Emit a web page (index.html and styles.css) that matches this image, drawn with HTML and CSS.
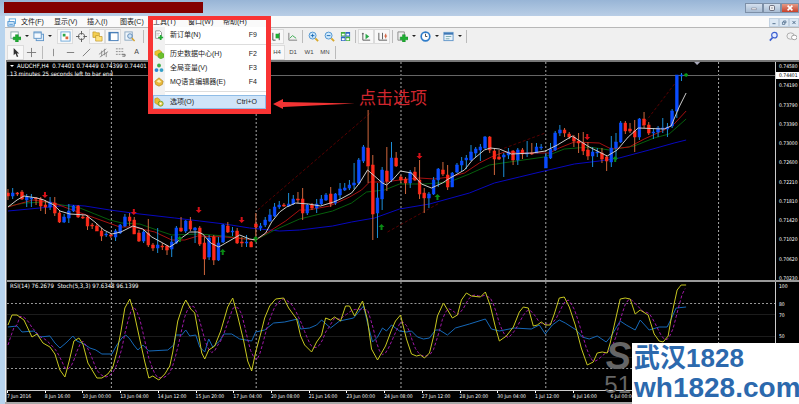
FILE: index.html
```html
<!DOCTYPE html>
<html lang="zh-CN">
<head>
<meta charset="utf-8">
<title>AUDCHF,H4</title>
<link rel="stylesheet" href="styles.css">
</head>
<body>
<header class="titlebar">
  <div class="title-block"></div>
  <div class="win-controls">
    <button class="win-btn" aria-label="最小化"><svg viewBox="0 0 18 10"><path d="M6 5h6v2H6z" fill="#fff" stroke="#667" stroke-width=".6"/></svg></button>
    <button class="win-btn" aria-label="还原"><svg viewBox="0 0 18 10"><rect x="6" y="2" width="6" height="6" rx="1" fill="#fff" stroke="#445"/><path d="M8 5h2" stroke="#445"/></svg></button>
    <button class="win-btn close" aria-label="关闭"><svg viewBox="0 0 18 10"><path d="M6 2l6 6M12 2l-6 6" stroke="#fff" stroke-width="2"/></svg></button>
  </div>
</header>
<div class="frame">
<nav class="menubar">
  <svg class="app-icon" viewBox="0 0 10 10"><rect x="2.500" y="1" width="7" height="5" fill="#fff" stroke="#58a6dc"/><rect x="1" y="4" width="7" height="5" fill="#d5eafb" stroke="#4a90cf"/><path d="M2.500 7h4" stroke="#4a90cf"/></svg>
  <button>文件(F)</button><button>显示(V)</button><button>插入(I)</button><button>图表(C)</button><button>工具(T)</button><button>窗口(W)</button><button>帮助(H)</button>
  <div class="mdi">
    <button aria-label="最小化"><svg viewBox="0 0 10 9"><path d="M3 6h4" stroke="#357"/></svg></button>
    <button aria-label="还原"><svg viewBox="0 0 10 9"><path d="M3 4h3v3H3zM4.500 4V2.500h3V5H6" fill="none" stroke="#357" stroke-width=".8"/></svg></button>
    <button aria-label="关闭"><svg viewBox="0 0 10 9"><path d="M3 2.500l4 4M7 2.500l-4 4" stroke="#357"/></svg></button>
  </div>
</nav>
<div class="toolbar main-tools">
  <div class="tools first">
    <button class="drop" aria-label="新图表"><svg viewBox="0 0 12 12"><rect x="1" y="1" width="8" height="7" fill="#fff" stroke="#8aa"/><path d="M6 4h3v2.500h3v3H9V12H6V9.500H3.500v-3H6z" fill="#1fae32" stroke="#0d8420" stroke-width=".5"/></svg></button>
    <button class="drop" aria-label="配置"><svg viewBox="0 0 12 12"><rect x="3.500" y="3.500" width="8" height="7" fill="#dcebf8" stroke="#5f95c8"/><rect x="1" y="1" width="8" height="7" fill="#f4f9fe" stroke="#5f95c8"/><path d="M1 2h8" stroke="#5f95c8"/></svg></button>
    <button class="on" aria-label="市场报价"><svg viewBox="0 0 12 12"><rect x="1" y="1" width="10" height="10" fill="#fff" stroke="#6aa6d8"/><path d="M3 3h3v3H3z" fill="#2aa84a"/><path d="M6 6h3v3H6z" fill="#e0663c"/></svg></button>
    <button aria-label="数据窗口"><svg viewBox="0 0 12 12"><circle cx="6" cy="6" r="3.500" fill="none" stroke="#666"/><path d="M6 0v4M6 8v4M0 6h4M8 6h4" stroke="#555"/></svg></button>
    <button class="on" aria-label="导航"><svg viewBox="0 0 12 12"><path d="M1 1h3l1 1h3v5H1z" fill="#f4cf52" stroke="#b98e20" stroke-width=".7"/><path d="M4 5h3l1 1h3v5H4z" fill="#ffe27a" stroke="#b98e20" stroke-width=".7"/></svg></button>
    <button class="on" aria-label="终端"><svg viewBox="0 0 12 12"><rect x="1" y="1.500" width="10" height="9" fill="#fff" stroke="#3f78b5"/><path d="M2 2v8" stroke="#3f78b5" stroke-width="2"/><path d="M1 2h10" stroke="#3f78b5"/></svg></button>
    <button aria-label="策略测试"><svg viewBox="0 0 12 12"><rect x="1" y="1" width="8" height="9" fill="#eef5fb" stroke="#8aa6c0"/><circle cx="6.500" cy="5.500" r="2.500" fill="#cfe4f6" stroke="#5a86b5"/><path d="M8.500 7.500l3 3.500" stroke="#d5a128" stroke-width="1.600"/></svg></button>
  </div>
  <i class="sep"></i>
  <div class="tools second">
    <button class="on" aria-label="蜡烛图"><svg viewBox="0 0 12 12"><path d="M2 2v8h3M9 2v8" stroke="#444" fill="none"/><path d="M5 3h4v5H5z" fill="#1fae32"/></svg></button>
    <button aria-label="折线图"><svg viewBox="0 0 12 12"><path d="M2 2v8h9" stroke="#777" fill="none"/><path d="M3 8l3-3 4 3" stroke="#35a84a" fill="none"/></svg></button>
    <i class="sep"></i>
    <button aria-label="放大"><svg viewBox="0 0 12 12"><circle cx="5" cy="5" r="3.800" fill="#cfe9fb" stroke="#4a90cf"/><path d="M3 5h4M5 3v4" stroke="#1e6ab3"/><path d="M8 8l3 3" stroke="#d8a82a" stroke-width="2"/></svg></button>
    <button aria-label="缩小"><svg viewBox="0 0 12 12"><circle cx="5" cy="5" r="3.800" fill="#cfe9fb" stroke="#4a90cf"/><path d="M3 5h4" stroke="#1e6ab3"/><path d="M8 8l3 3" stroke="#d8a82a" stroke-width="2"/></svg></button>
    <button aria-label="平铺"><svg viewBox="0 0 12 12"><path d="M1 1h5v5H1zM6 6h5v5H6z" fill="#44b03c"/><path d="M6 1h5v5H6zM1 6h5v5H1z" fill="#2f66c4"/><path d="M2 3h3v2H2zM7 3h3v2H7zM2 8h3v2H2zM7 8h3v2H7z" fill="#fff"/></svg></button>
    <i class="sep"></i>
    <button class="on" aria-label="自动滚动"><svg viewBox="0 0 12 12"><path d="M2 2v8h8M1 3h2" stroke="#555" fill="none"/><path d="M5 3l4 3-4 3z" fill="#2aa84a"/></svg></button>
    <button class="on" aria-label="图表平移"><svg viewBox="0 0 12 12"><path d="M2 2v8h9M6 2v7" stroke="#555" fill="none"/><path d="M11 5.500H8M9.500 3v5" stroke="#d0522c"/></svg></button>
    <i class="sep"></i>
    <button class="drop" aria-label="指标"><svg viewBox="0 0 12 12"><path d="M1 1h7v9H1z" fill="#eee" stroke="#888"/><path d="M6 4h3v2.500h3v3H9V12H6V9.500H3.500v-3H6z" fill="#1fae32" stroke="#0d8420" stroke-width=".5"/></svg></button>
    <button class="drop" aria-label="时段"><svg viewBox="0 0 12 12"><circle cx="6" cy="6" r="4.700" fill="#fff" stroke="#2f7cc9" stroke-width="1.800"/><path d="M6 3v3h2" stroke="#444" fill="none"/></svg></button>
    <button class="drop" aria-label="模板"><svg viewBox="0 0 12 12"><rect x="1" y="1.500" width="10" height="9" fill="#eaf3fb" stroke="#5f95c8"/><path d="M1 3h10" stroke="#3f78b5" stroke-width="2"/><path d="M3 6h6M3 8.500h4" stroke="#7aa" /></svg></button>
    <i class="sep"></i>
  </div>
  <div class="tools right">
    <button aria-label="搜索"><svg viewBox="0 0 12 12"><circle cx="7" cy="4.500" r="3" fill="#e4ecff" stroke="#3c5fd0" stroke-width="1.300"/><path d="M5 7l-3 3.500" stroke="#3c5fd0" stroke-width="1.800"/></svg></button>
    <button aria-label="聊天"><svg viewBox="0 0 12 12"><ellipse cx="5" cy="5.500" rx="4" ry="3.500" fill="#f2f2f2" stroke="#aaa"/><ellipse cx="9" cy="7" rx="3" ry="2.500" fill="#fff" stroke="#999"/></svg></button>
  </div>
</div>
<div class="toolbar line-tools">
  <div class="tools draw">
    <button class="on" aria-label="光标"><svg viewBox="0 0 12 12"><path d="M4 1v8l2-2 1.500 4 1.500-.6L7.500 7H10z" fill="#333"/></svg></button>
    <button aria-label="十字线"><svg viewBox="0 0 12 12"><path d="M6 1v10M1 6h10" stroke="#777"/></svg></button>
    <i class="sep"></i>
    <button aria-label="垂直线"><svg viewBox="0 0 12 12"><path d="M6 2v8" stroke="#888"/></svg></button>
    <button aria-label="水平线"><svg viewBox="0 0 12 12"><path d="M2 6h8" stroke="#777"/></svg></button>
    <button aria-label="趋势线"><svg viewBox="0 0 12 12"><path d="M2 10l8-8" stroke="#777"/></svg></button>
    <button aria-label="通道"><svg viewBox="0 0 12 12"><path d="M1 8l8-6M2 11l9-6M4 4v6M7 2v7M9 6v5" stroke="#777" stroke-width=".8"/></svg></button>
    <button aria-label="斐波纳契"><svg viewBox="0 0 12 12"><path d="M1 2h9M1 5h9M1 8h9" stroke="#888" stroke-dasharray="2 1"/><path d="M8 8h3v2H8" stroke="#666" fill="none"/></svg></button>
    <button>A</button>
  </div>
  <div class="tools periods">
    <button class="on">H4</button><button>D1</button><button>W1</button><button>MN</button><i class="sep"></i>
  </div>
</div>
<main class="chart">
  <section class="pane">
    <svg id="price" viewBox="7 62 769 218" preserveAspectRatio="none"></svg>
    <div class="legend"><span class="symbol">AUDCHF,H4&nbsp; 0.74401 0.74449 0.74399 0.74401</span><span>13 minutes 25 seconds left to bar end</span></div>
  </section>
  <div class="axis prices">
    <span>0.74580</span><span>0.74190</span><span>0.73790</span><span>0.73390</span><span>0.73000</span><span>0.72600</span><span>0.72210</span><span>0.71810</span><span>0.71420</span><span>0.71020</span><span>0.70620</span><span>0.70230</span>
    <b class="current">0.74401</b>
  </div>
  <div class="divider"></div>
  <section class="pane">
    <svg id="osc" viewBox="7 282 769 108" preserveAspectRatio="none"></svg>
    <div class="legend"><span>RSI(14) 76.2679&nbsp; Stoch(5,3,3) 97.6348 96.1399</span></div>
  </section>
  <div class="axis levels"><span>100</span><span>80</span><span>70</span><span>50</span></div>
  <div class="times">
    <span>7 Jun 2016</span><span>8 Jun 16:00</span><span>10 Jun 00:00</span><span>13 Jun 04:00</span><span>14 Jun 12:00</span><span>15 Jun 20:00</span><span>17 Jun 04:00</span><span>20 Jun 08:00</span><span>21 Jun 16:00</span><span>23 Jun 00:00</span><span>24 Jun 08:00</span><span>27 Jun 12:00</span><span>28 Jun 20:00</span><span>30 Jun 04:00</span><span>1 Jul 12:00</span><span>4 Jul 16:00</span><span>6 Jul 00:00</span>
  </div>
</main>
<footer class="bottom"></footer>
</div>

<div class="tool-menu">
  <ul>
    <li><button><svg viewBox="0 0 12 12"><path d="M2 1h5l2 2v7H2z" fill="#fff" stroke="#888"/><path d="M3 4h4M3 6h3" stroke="#999" stroke-width=".7"/><path d="M7 6h2v2h2v2H9v2H7v-2H5V8h2z" fill="#1fae32"/></svg><span>新订单(N)</span><kbd>F9</kbd></button></li>
    <li class="rule"></li>
    <li><button><svg viewBox="0 0 12 12"><path d="M1 3l5-2 3 2v4l-4 2-4-2z" fill="#e9c52e" stroke="#b08d10" stroke-width=".5"/><path d="M5 6l4-2 3 2v4l-4 2-3-2z" fill="#6cc02c" stroke="#3f8c14" stroke-width=".5"/></svg><span>历史数据中心(H)</span><kbd>F2</kbd></button></li>
    <li><button><svg viewBox="0 0 12 12"><circle cx="6" cy="3" r="2.300" fill="#3fae49"/><circle cx="3" cy="8.500" r="2.300" fill="#2f86d6"/><circle cx="9" cy="8.500" r="2.300" fill="#34a0c8"/></svg><span>全局变量(V)</span><kbd>F3</kbd></button></li>
    <li><button><svg viewBox="0 0 12 12"><path d="M1 5l5-4 5 4-1 4-4 2-4-2z" fill="#e8b83a" stroke="#a87a14" stroke-width=".7"/><path d="M3 5l3-2 3 3-3 1z" fill="#fff0b0"/></svg><span>MQ语言编辑器(E)</span><kbd>F4</kbd></button></li>
    <li class="rule"></li>
    <li><button class="active"><svg viewBox="0 0 12 12"><path d="M1 2l3-1 3 2v5l-3 1-3-2z" fill="#e8c02e" stroke="#a88410" stroke-width=".6"/><circle cx="8" cy="8" r="3" fill="#f0d050" stroke="#6a9a20"/><circle cx="8" cy="8" r="1" fill="#fff"/></svg><span>选项(O)</span><kbd>Ctrl+O</kbd></button></li>
  </ul>
</div>
<div class="callout"><svg viewBox="0 0 84 10"><path d="M0 5L10 0V3L82 4.500L10 8V10z" fill="#f23333"/></svg><span>点击选项</span></div>
<div class="ghost"><i>S</i><span>51</span></div>
<div class="watermark"><span>武汉1828</span><span>wh1828.com</span></div>
<script src="chart.js"></script>
</body>
</html>
```
FILE: styles.css
```css
* { box-sizing: border-box; }
body {
  margin: 0;
  min-height: 100vh;
  display: flex;
  flex-direction: column;
  position: relative;
  overflow: hidden;
  background: #f0f0f0;
  font: 7px/10px "Liberation Sans", "Noto Sans CJK SC", sans-serif;
  color: #222;
}
button {
  border: 0;
  padding: 0;
  background: none;
  font: inherit;
  color: inherit;
}
svg { display: block; }

.titlebar {
  height: 16px;
  display: flex;
  justify-content: space-between;
  padding: 2px 0 3px 4px;
  background: linear-gradient(#98b5d6, #b9cee6);
}
.title-block { width: 199px; background: #840000; }
.win-controls { display: flex; align-items: flex-end; }
.win-btn {
  width: 18px;
  height: 10px;
  border: 1px solid #7d90a8;
  background: linear-gradient(#d4e0ee, #a9bdd4);
}
.win-btn svg { width: 16px; height: 8px; }
.win-btn.close { background: linear-gradient(#e59a86, #c8402a); }

.frame {
  flex: 1;
  display: flex;
  flex-direction: column;
  border-left: 5px solid #b8d4ee;
}
.menubar {
  height: 11px;
  display: flex;
  align-items: center;
  background: #fafafa;
  padding: 1px 0 0 2px;
}
.app-icon { width: 9px; height: 9px; margin-right: 5px; }
.menubar > button { width: 33px; text-align: left; white-space: nowrap; }
.menubar > button:nth-of-type(n+5) { width: 35px; }
.mdi { margin-left: auto; display: flex; }
.mdi button { width: 10px; height: 9px; background: #dce8f4; border: 1px solid #c2d2e2; }
.mdi svg { width: 8px; height: 7px; }

.toolbar { display: flex; align-items: center; background: #f0f0f0; }
.main-tools { height: 17px; border-top: 1px solid #b8b8b8; }
.line-tools { height: 16px; }
.tools { display: flex; align-items: center; }
.tools.first { padding-left: 3px; width: 136px; }
.tools button {
  width: 16px;
  height: 15px;
  display: flex;
  align-items: center;
  justify-content: center;
  color: #444;
}
.tools button svg { width: 11px; height: 11px; }
.tools .on { background: #f8f8f8; box-shadow: inset 0 0 0 1px #dcdcdc; }
.tools .drop { width: 23px; justify-content: flex-start; padding-left: 2px; gap: 4px; }
.tools .drop::after {
  content: "";
  border: 2px solid transparent;
  border-top-color: #222;
  border-bottom-width: 0;
}
.first .drop + button:not(.drop) { margin-left: 3px; }
.sep { width: 1px; height: 13px; background: #bbb; margin: 0 2px; }
.second { margin-left: 122px; }
.tools.right { margin-left: auto; gap: 2px; }
.draw { padding-left: 2px; width: 140px; }
.draw button { width: 17px; }
.periods { margin-left: 124px; }
.periods button { font-size: 6px; }

.chart {
  flex: 1;
  display: grid;
  grid-template: 218fr 2px 108fr 12px / 1fr 23px;
  margin-left: 2px;
  background: #000;
  border-top: 2px solid #777;
  box-shadow: -1px 0 #777;
  color: #fff;
  font: 5px/8px "DejaVu Sans Condensed", sans-serif;
}
.pane { position: relative; min-height: 0; border-right: 1px solid #ccc; }
.pane svg { position: absolute; width: 100%; height: 100%; }
.legend {
  position: relative;
  display: flex;
  flex-direction: column;
  align-items: flex-start;
  padding-left: 3px;
  font-size: 6px;
}
.symbol::before {
  content: "";
  display: inline-block;
  border: 2px solid transparent;
  border-top-color: #fff;
  border-bottom: 0;
  margin-right: 3px;
  vertical-align: middle;
}
.axis { padding-left: 3px; }
.prices {
  position: relative;
  display: flex;
  flex-direction: column;
  justify-content: space-between;
  padding-top: 2px;
  line-height: 4px;
}
.current {
  position: absolute;
  left: 0;
  right: 0;
  top: 10px;
  padding-left: 3px;
  background: #fff;
  color: #000;
  font-weight: normal;
  line-height: 7px;
}
.divider { grid-column: 1 / -1; background: #999; }
.levels { display: grid; grid-template-rows: 18px 11px 21px 21px; }
.times {
  grid-column: 1 / -1;
  display: grid;
  grid-template-columns: repeat(21, 1fr);
  border-top: 1px solid #ccc;
  white-space: nowrap;
}
.times span { padding-top: 1px; background: linear-gradient(#fff, #fff) 0 0 / 1px 2px no-repeat; }
.bottom { height: 2px; background: #a8a8a8; }

.tool-menu {
  position: absolute;
  left: 148px;
  top: 16px;
  width: 123px;
  border: 5px solid #f93434;
  border-top-width: 4px;
  padding-top: 7px;
}
.tool-menu ul {
  list-style: none;
  margin: 0;
  padding: 1px 0 0;
  background: linear-gradient(90deg, #f1f1f1 12px, #fff 12px);
}
.tool-menu button {
  width: 100%;
  height: 14px;
  display: flex;
  align-items: center;
  padding: 0 9px 0 0;
  white-space: nowrap;
}
.tool-menu button svg { width: 10px; height: 10px; margin: 0 6px 0 1px; }
.tool-menu kbd { margin-left: auto; font: inherit; }
.tool-menu .active { background: #cfe4f8; box-shadow: inset 0 0 0 1px #8fbce6; }
.rule { height: 5px; background: linear-gradient(#ddd, #ddd) 12px 2px / 100% 1px no-repeat; }
.rule + li:last-child { margin-top: 1px; }

.callout {
  position: absolute;
  left: 273px;
  top: 87px;
  display: flex;
  align-items: flex-start;
  gap: 2px;
  color: #d0262e;
  font: 17px/20px "Noto Sans CJK SC", sans-serif;
}
.callout svg { width: 84px; height: 10px; margin-top: 12px; }

.ghost {
  position: absolute;
  right: 168px;
  bottom: 6px;
  display: flex;
  flex-direction: column;
  align-items: flex-end;
  color: #666;
  font: 24px/26px "Liberation Sans", sans-serif;
}
.ghost i { font-size: 38px; font-weight: bold; line-height: 32px; }
.watermark {
  position: absolute;
  right: 0;
  bottom: 0;
  width: 167px;
  height: 61px;
  padding-left: 2px;
  display: flex;
  flex-direction: column;
  background: #fff;
  color: #2c69ad;
  font: bold 28px/30px "Liberation Sans", "Noto Sans CJK SC", sans-serif;
}
.watermark span:first-child { font-size: 26px; }
```
FILE: chart.js
```js
const NS = "http://www.w3.org/2000/svg";
const price = document.getElementById("price");
const osc = document.getElementById("osc");

function add(svg, name, attrs) {
  const el = document.createElementNS(NS, name);
  for (const k in attrs) el.setAttribute(k, attrs[k]);
  svg.appendChild(el);
}
function line(svg, pts, stroke, extra) {
  add(svg, "polyline", { points: pts, fill: "none", stroke, "stroke-width": 1, ...extra });
}

// Session separators
for (const x of [111, 256, 401, 546, 719]) {
  line(price, `${x + 0.5},62 ${x + 0.5},280`, "#aaa", { "stroke-dasharray": "2 2" });
  line(osc, `${x + 0.5},282 ${x + 0.5},390`, "#aaa", { "stroke-dasharray": "2 2" });
}
line(price, "7,75.5 776,75.5", "#666");
add(price, "path", { d: "M695 62h6l-3 3z", fill: "#aab" });

// Trend lines
for (const p of ["258,210 372,112", "388,232 440,203", "500,150 546,133", "640,130 680,78"])
  line(price, p, "#500", { "stroke-dasharray": "3 2" });

// Moving averages
line(price, "8,211 40,208 70,205 85,206 110,210 140,214 175,218 200,221 225,224 250,228 280,231 300,230 333,226 352,222 375,218 400,209 430,204 470,193 495,183 520,177 545,171 575,164 600,161 620,158 650,150 675,143 687,140", "#0808c0");
line(price, "8,206 25,203 45,202 80,208 95,214 110,220 122,223 140,224 160,231 172,235 200,234 225,236 256,240 275,230 300,219 333,211 352,203 367,192 385,190 400,184 425,184 450,182 470,174 490,165 510,162 545,157 565,149 590,147 610,150 635,146 655,138 670,134 687,119", "#065f0c");
line(price, "8,207 22,203 33,200 54,203 67,208 95,218 120,227 133,227 155,232 172,240 185,240 198,236 226,237 256,240 275,228 286,221 300,210 309,210 330,206 350,197 362,190 370,182 385,182 400,180 420,178 435,179 450,177 465,173 480,163 492,157 505,152 530,153 550,153 560,148 575,142 600,143 612,149 630,147 645,139 665,130 675,124 687,111", "#a81010");

// Candles: high, body top, body bottom, low, colour
const candles = `189 193 196 200 R|188 193 196 199 B|192 193 194 196 R|190 192 199 200 R|194 197 200 207 B|194 198 199 207 B|197 198 199 205 R|197 199 206 211 R|200 205 207 214 R|197 202 207 210 B|197 203 213 216 R|211 213 222 223 R|214 217 222 223 B|204 211 218 223 B|205 206 211 212 B|205 206 217 218 R|215 217 218 219 R|215 217 226 230 R|223 225 226 229 R|224 226 231 231 R|228 231 236 241 R|232 234 235 237 B|233 235 236 238 R|229 231 237 241 B|224 225 233 234 B|214 217 226 227 B|213 217 221 226 R|217 220 234 234 R|230 233 241 242 R|230 232 241 243 B|219 233 245 247 R|243 245 248 251 R|228 245 248 253 B|243 246 247 250 R|245 246 250 255 R|236 242 249 257 B|226 228 243 244 B|217 228 231 232 R|220 221 231 233 B|217 221 229 231 R|227 228 230 243 B|226 228 244 246 R|237 243 259 275 R|235 238 257 260 B|235 237 260 265 R|237 243 260 261 B|224 225 242 243 B|222 226 232 233 R|227 231 232 236 B|228 231 243 244 R|237 242 243 247 R|235 242 243 247 B|241 242 247 247 R|213 224 227 237 R|223 226 228 231 B|217 220 225 227 B|209 215 221 222 B|203 207 216 217 B|201 205 207 209 B|203 205 206 207 R|193 204 206 207 B|195 199 204 205 B|192 199 200 203 R|188 199 213 220 R|204 205 213 215 B|203 205 208 210 R|199 204 208 213 B|195 199 204 205 B|193 195 200 201 B|187 194 204 207 R|193 194 203 205 B|183 189 195 199 B|183 188 190 191 B|180 185 188 190 B|163 183 185 189 B|158 160 183 185 B|145 147 161 163 B|110 148 166 183 R|155 165 214 240 R|183 198 213 238 B|167 170 199 210 B|147 171 181 191 R|142 158 180 182 B|152 158 166 167 R|175 177 180 183 R|177 179 183 194 R|170 172 183 188 B|167 172 180 181 R|160 180 194 199 R|188 193 198 213 R|192 194 198 208 B|177 180 194 195 B|168 169 180 187 B|162 170 174 176 R|165 175 187 190 R|172 173 187 187 B|163 165 172 173 B|157 161 165 171 B|155 158 160 169 B|145 152 160 161 B|147 149 153 157 B|144 147 150 161 B|136 137 148 149 B|136 137 150 153 R|148 151 159 175 R|150 157 159 160 R|153 155 157 177 B|148 152 155 159 B|150 151 160 165 R|148 150 160 165 B|148 150 154 159 R|141 153 154 157 B|143 153 154 155 R|143 147 153 153 B|144 147 148 150 B|153 157 168 168 B|143 149 158 159 B|131 133 150 151 B|125 130 133 136 B|128 130 133 137 R|132 134 137 139 R|135 137 141 147 R|133 141 143 153 R|132 143 151 155 R|142 150 156 160 R|147 152 156 167 B|148 152 153 157 B|148 153 159 163 R|155 157 161 171 R|136 148 162 167 B|133 142 148 160 B|121 123 142 143 B|121 123 131 134 R|123 129 131 133 R|120 131 137 152 R|118 119 137 140 B|112 119 125 128 R|122 125 133 135 R|128 132 133 139 B|126 128 132 137 B|118 128 129 133 B|123 127 129 137 B|109 111 126 128 B|75 75 111 118 B|73 75 76 81 B|73 74 76 77 G`;
const wick = { R: "#d0663c", B: "#1c8fd8", G: "#0a9a1a" };
const body = { R: "#ff2a1a", B: "#0a4cff", G: "#0a9a1a" };
candles.split("|").forEach((row, i) => {
  const [h, t, b, l, c] = row.split(" ");
  const x = 8 + i * 4.683;
  line(price, `${x},${h} ${x},${l}`, wick[c]);
  add(price, "rect", { x: x - 1.4, y: t, width: 2.8, height: Math.max(1, b - t), fill: body[c], stroke: body[c], "stroke-width": 0.5 });
});

line(price, "8,207 17,200 24,196 37,198 44,200 54,205 60,211 70,214 86,215 95,222 104,230 112,234 121,232 133,226 143,229 152,237 163,243 170,247 176,243 183,237 190,232 198,232 203,234 211,243 219,247 226,243 240,235 250,239 256,240 266,233 272,222 280,212 287,207 296,203 309,204 321,206 334,202 341,199 352,193 360,183 368,170 375,176 383,183 387,185 393,180 401,171 412,173 422,184 432,188 443,183 449,179 465,170 473,160 485,150 491,148 500,149 512,154 533,153 546,151 558,145 573,136 590,147 608,156 618,150 629,137 639,128 665,129 672,126 680,107 687,93", "#ccc");

// Signal arrows
const arrow = (x, y, fill, d) => add(price, "path", { d: `M${x} ${y + 3 * d}l-3 ${-3 * d}h2v${-3 * d}h2v${3 * d}h2z`, fill });
[[45, 195], [134, 212], [199, 210], [242, 220], [420, 156], [588, 137]].forEach(([x, y]) => arrow(x, y, "#d81018", 1));
[[180, 239], [223, 252], [256, 239], [382, 227], [438, 197], [616, 159]].forEach(([x, y]) => arrow(x, y, "#0a8a14", -1));

// Oscillator levels
for (const y of [314.5, 336.5, 357.5]) line(osc, `7,${y} 776,${y}`, "#1c1c1c");
for (const y of [303.5, 368.5]) line(osc, `7,${y} 776,${y}`, "#999", { "stroke-dasharray": "2 2" });

const stoch = "8,325 12,315 17,315 24,320 32,337 37,334 43,343 50,347 55,354 60,370 65,377 69,362 74,341 79,338 83,344 88,363 97,378 102,378 108,374 113,367 117,352 121,332 125,308 130,299 134,312 139,335 145,362 149,378 153,376 159,380 165,374 170,366 173,352 178,321 183,306 186,300 191,309 195,313 199,335 202,353 205,359 209,350 215,346 221,331 228,307 233,298 238,316 244,341 248,361 252,371 256,352 262,330 265,318 270,306 276,299 284,298 289,308 297,319 301,336 305,345 312,352 317,342 322,335 326,318 331,320 335,317 341,321 346,306 350,306 355,316 363,301 368,320 372,349 378,360 386,346 392,330 396,321 401,315 407,339 412,354 417,356 421,355 425,358 430,353 434,337 438,316 444,303 450,313 453,318 458,315 462,300 467,293 472,296 481,297 486,292 491,306 496,327 500,341 507,336 514,327 520,312 524,307 529,308 534,326 538,325 542,322 546,325 551,325 555,314 560,298 565,297 570,307 576,325 582,348 588,365 594,362 598,353 603,352 608,353 611,343 616,321 621,299 626,298 631,299 636,314 641,310 649,315 655,334 660,341 664,342 669,336 673,313 678,290 682,285 687,285";
const pts = stoch.split(" ").map(p => p.split(",").map(Number));
function at(x) {
  if (x <= 8) return 345;
  const k = pts.findIndex(p => p[0] >= x);
  const [x0, y0] = pts[k - 1], [x1, y1] = pts[k];
  return y0 + (y1 - y0) * (x - x0) / (x1 - x0);
}
// Signal line: three-bar average of the main line
const signal = [];
for (let x = 8; x <= 687; x += 3) signal.push(`${x},${(at(x) + at(x - 5) + at(x - 9)) / 3}`);
line(osc, "8,327 17,326 22,332 34,331 40,337 50,336 55,343 60,348 66,343 73,336 77,341 84,344 90,348 96,350 102,354 112,354 117,345 122,338 126,335 130,339 134,345 138,350 143,345 149,351 168,350 174,345 176,335 182,335 186,330 190,336 196,335 200,347 205,352 209,339 213,347 220,341 224,334 232,334 240,339 252,341 256,332 265,330 274,323 285,322 298,319 301,329 310,328 317,325 322,320 331,328 340,321 354,318 364,306 368,323 373,342 378,337 383,328 387,331 392,325 400,331 407,332 412,331 418,337 424,339 430,338 436,330 440,330 448,335 456,328 470,324 486,319 492,329 500,331 515,328 532,329 540,325 546,334 553,325 560,320 566,323 577,330 583,337 590,339 598,336 607,342 612,336 621,321 627,325 636,330 641,320 650,330 660,327 668,327 672,319 677,308 687,307", "#1668b8");
line(osc, signal.join(" "), "#a018a8", { "stroke-dasharray": "3 2" });
line(osc, stoch, "#c8c820");
```
